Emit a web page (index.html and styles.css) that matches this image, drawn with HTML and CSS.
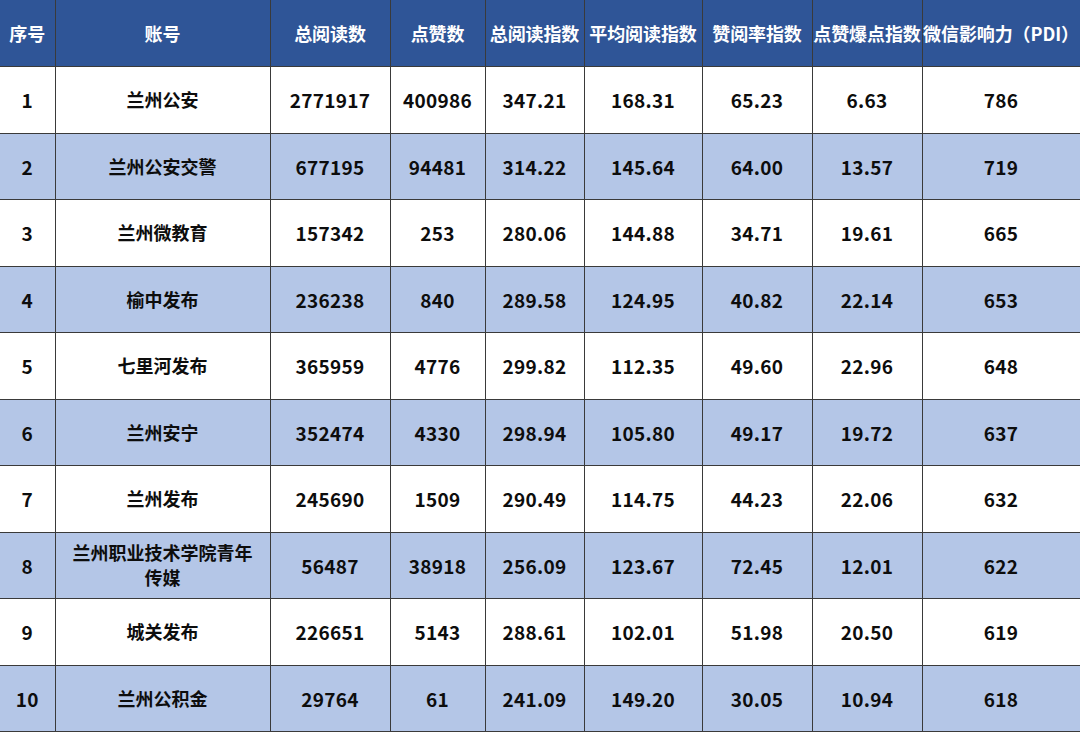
FILE: index.html
```html
<!DOCTYPE html>
<html lang="zh-CN">
<head>
<meta charset="utf-8">
<link rel="stylesheet" href="styles.css">
</head>
<body>
<table class="rank">
  <colgroup>
    <col class="c1"><col class="c2"><col class="c3"><col class="c4"><col class="c5"><col class="c6"><col class="c7"><col class="c8"><col class="c9">
  </colgroup>
  <thead>
    <tr><th>序号</th><th>账号</th><th>总阅读数</th><th>点赞数</th><th>总阅读指数</th><th>平均阅读指数</th><th>赞阅率指数</th><th>点赞爆点指数</th><th>微信影响力（PDI）</th></tr>
  </thead>
  <tbody>
    <tr><td>1</td><td class="name">兰州公安</td><td>2771917</td><td>400986</td><td>347.21</td><td>168.31</td><td>65.23</td><td>6.63</td><td>786</td></tr>
    <tr class="alt"><td>2</td><td class="name">兰州公安交警</td><td>677195</td><td>94481</td><td>314.22</td><td>145.64</td><td>64.00</td><td>13.57</td><td>719</td></tr>
    <tr><td>3</td><td class="name">兰州微教育</td><td>157342</td><td>253</td><td>280.06</td><td>144.88</td><td>34.71</td><td>19.61</td><td>665</td></tr>
    <tr class="alt"><td>4</td><td class="name">榆中发布</td><td>236238</td><td>840</td><td>289.58</td><td>124.95</td><td>40.82</td><td>22.14</td><td>653</td></tr>
    <tr><td>5</td><td class="name">七里河发布</td><td>365959</td><td>4776</td><td>299.82</td><td>112.35</td><td>49.60</td><td>22.96</td><td>648</td></tr>
    <tr class="alt"><td>6</td><td class="name">兰州安宁</td><td>352474</td><td>4330</td><td>298.94</td><td>105.80</td><td>49.17</td><td>19.72</td><td>637</td></tr>
    <tr><td>7</td><td class="name">兰州发布</td><td>245690</td><td>1509</td><td>290.49</td><td>114.75</td><td>44.23</td><td>22.06</td><td>632</td></tr>
    <tr class="alt"><td>8</td><td class="name wrap">兰州职业技术学院青年<br>传媒</td><td>56487</td><td>38918</td><td>256.09</td><td>123.67</td><td>72.45</td><td>12.01</td><td>622</td></tr>
    <tr><td>9</td><td class="name">城关发布</td><td>226651</td><td>5143</td><td>288.61</td><td>102.01</td><td>51.98</td><td>20.50</td><td>619</td></tr>
    <tr class="alt"><td>10</td><td class="name">兰州公积金</td><td>29764</td><td>61</td><td>241.09</td><td>149.20</td><td>30.05</td><td>10.94</td><td>618</td></tr>
  </tbody>
</table>
</body>
</html>
```
FILE: styles.css
```css
html, body {
  margin: 0;
  padding: 0;
  background: #ffffff;
}
body {
  font-family: "Noto Sans CJK SC", "Noto Sans", sans-serif;
  font-weight: 700;
}
.rank {
  width: 1080px;
  table-layout: fixed;
  border-collapse: collapse;
  border-spacing: 0;
}
.c1 { width: 55px; }
.c2 { width: 215px; }
.c3 { width: 120px; }
.c4 { width: 95px; }
.c5 { width: 99px; }
.c6 { width: 118px; }
.c7 { width: 110px; }
.c8 { width: 110px; }
.c9 { width: 158px; }
.rank th,
.rank td {
  padding: 0;
  text-align: center;
  vertical-align: middle;
  white-space: nowrap;
  border-right: 1px solid #3a3a3a;
  border-bottom: 1px solid #3a3a3a;
}
.rank th {
  height: 66px;
  background: #2f5597;
  color: #ffffff;
  font-size: 18px;
  font-weight: 700;
  letter-spacing: -0.1px;
  overflow: visible;
}
.rank td {
  height: 65.5px;
  color: #0d0d0d;
  font-size: 19px;
  letter-spacing: 0.3px;
  line-height: 25px;
  background: #ffffff;
}
.rank td.name {
  font-size: 18px;
  letter-spacing: 0;
}
.rank tr.alt td {
  background: #b4c6e7;
}
.rank td.wrap {
  white-space: normal;
}
```
